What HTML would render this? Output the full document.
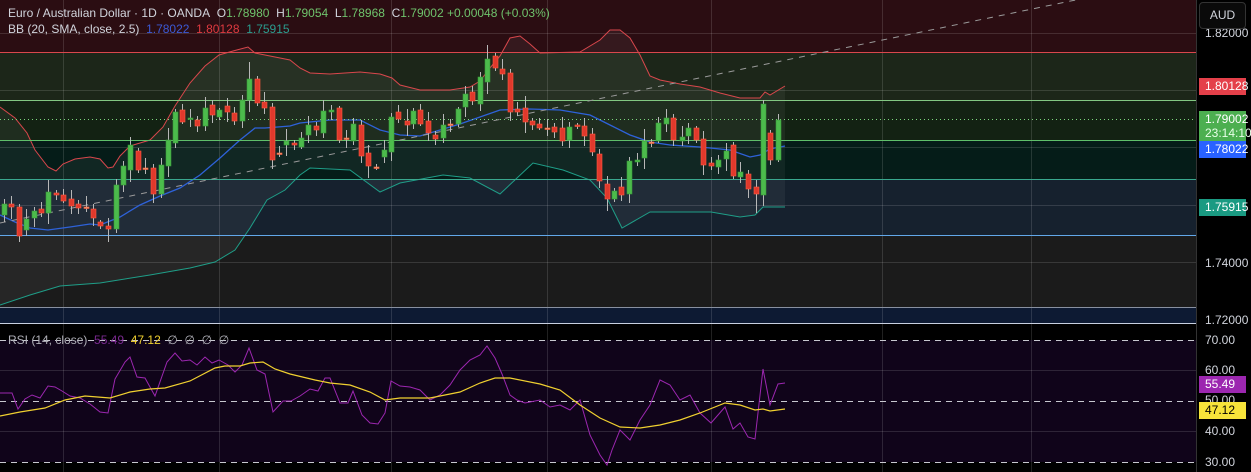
<!DOCTYPE html><html><head><meta charset="utf-8"><style>
body{margin:0;background:#000;width:1251px;height:472px;overflow:hidden;font-family:"Liberation Sans",sans-serif}
svg{position:absolute;left:0;top:0}
.t{position:absolute;font-size:12px;color:#d1d4dc;white-space:nowrap}
.lb{position:absolute;left:1199px;width:47px;font-size:12px;color:#fff;padding-left:6px;box-sizing:border-box;height:17px;line-height:17px}
.ax{position:absolute;left:1205px;font-size:12px;color:#d1d4dc}
</style></head><body>
<svg width="1251" height="472" id="s">
<rect x="0" y="0" width="1196" height="52" fill="#2b0d12"/>
<rect x="0" y="52" width="1196" height="48" fill="#1c2619"/>
<rect x="0" y="100" width="1196" height="40" fill="#132213"/>
<rect x="0" y="140" width="1196" height="39" fill="#051c18"/>
<rect x="0" y="179" width="1196" height="56" fill="#16212e"/>
<rect x="0" y="235" width="1196" height="72" fill="#1b1b1b"/>
<rect x="0" y="307" width="1196" height="16" fill="#0d1a33"/>
<rect x="0" y="324" width="1196" height="148" fill="#000"/>
<rect x="0" y="340" width="1196" height="122" fill="#10041a"/>
<g stroke="#ffffff" stroke-opacity="0.13" stroke-width="1">
<path d="M63.5 0V472M219.5 0V472M391.5 0V472M547.5 0V472M711.5 0V472M882.5 0V472M1031.5 0V472"/>
<path d="M0 33.5H1196M0 90.5H1196M0 147.5H1196M0 205.5H1196M0 262.5H1196M0 370.5H1196M0 431.5H1196"/>
</g>
<g id="bb"></g>
<line x1="0" y1="52.5" x2="1196" y2="52.5" stroke="#d9474c"/>
<line x1="0" y1="100.5" x2="1196" y2="100.5" stroke="#82c882"/>
<line x1="0" y1="119.5" x2="1196" y2="119.5" stroke="#7ed67e" stroke-dasharray="1 3"/>
<line x1="0" y1="140.5" x2="1196" y2="140.5" stroke="#5fbf6a"/>
<line x1="0" y1="179.5" x2="1196" y2="179.5" stroke="#3aa88e"/>
<line x1="0" y1="235.5" x2="1196" y2="235.5" stroke="#62a8ea"/>
<line x1="0" y1="307.5" x2="1196" y2="307.5" stroke="#8890a0"/>
<line x1="0" y1="223" x2="1090" y2="-3" stroke="#9a9a9a" stroke-dasharray="6 6"/>
<g id="cd"></g>
<line x1="0" y1="323.5" x2="1251" y2="323.5" stroke="#c8d0e0"/>
<g stroke="#c8c8d0" stroke-dasharray="6 5"><path d="M0 340.5H1196M0 462.5H1196M0 401.5H1196"/></g>
<g id="rs"></g>
<rect x="1196" y="0" width="55" height="472" fill="#000"/>
<line x1="1196.5" y1="0" x2="1196.5" y2="472" stroke="#333"/>
</svg>
<div class="t" style="left:8px;top:6px">Euro / Australian Dollar · 1D · OANDA&nbsp; O<span style="color:#6fc36c">1.78980</span>&nbsp; H<span style="color:#6fc36c">1.79054</span>&nbsp; L<span style="color:#6fc36c">1.78968</span>&nbsp; C<span style="color:#6fc36c">1.79002</span> <span style="color:#6fc36c">+0.00048 (+0.03%)</span></div>
<div class="t" style="left:8px;top:22px">BB (20, SMA, close, 2.5)&nbsp; <span style="color:#3c5ad6">1.78022</span>&nbsp; <span style="color:#e03a40">1.80128</span>&nbsp; <span style="color:#2a9d8f">1.75915</span></div>
<div class="t" style="left:8px;top:333px;color:#b0b0b8">RSI (14, close)&nbsp; <span style="color:#7a2a90">55.49</span>&nbsp; <span style="color:#f0d030">47.12</span>&nbsp; ∅&nbsp; ∅&nbsp; ∅&nbsp; ∅</div>
<div class="ax" style="top:26px">1.82000</div>
<div style="position:absolute;left:1199px;top:2px;width:45px;height:25px;border:1px solid #333;border-radius:4px;background:#0a0a0a;color:#d1d4dc;font-size:12px;line-height:25px;text-align:center">AUD</div>
<div class="lb" style="top:78px;background:#e4404a">1.80128</div>
<div class="lb" style="top:111px;height:30px;line-height:14px;padding-top:1px;background:#4caf50">1.79002<br><span style="color:#e8ffe8">23:14:10</span></div>
<div class="lb" style="top:141px;background:#2962ff">1.78022</div>
<div class="lb" style="top:199px;background:#1a9a82">1.75915</div>
<div class="ax" style="top:256px">1.74000</div>
<div class="ax" style="top:313px">1.72000</div>
<div class="ax" style="top:333px">70.00</div>
<div class="ax" style="top:363px">60.00</div>
<div class="lb" style="top:376px;background:#9c27b0">55.49</div>
<div class="ax" style="top:393px">50.00</div>
<div class="lb" style="top:402px;background:#f7e43a;color:#000">47.12</div>
<div class="ax" style="top:424px">40.00</div>
<div class="ax" style="top:455px">30.00</div>
<script>
var NS="http://www.w3.org/2000/svg";
function el(p,t,a){var e=document.createElementNS(NS,t);for(var k in a)e.setAttribute(k,a[k]);p.appendChild(e);return e;}
function pts(a){return a.map(function(p){return p[0]+","+p[1]}).join(" ");}
var up=[[0,107],[15,118],[27,133],[35,150],[48,167],[56,171],[63,164],[75,159],[90,157],[100,159],[108,168],[113,167],[120,156],[130,146],[140,143],[150,140],[163,127],[175,106],[190,83],[205,66],[219,55],[233,51],[248,47],[255,53],[265,55],[290,60],[300,68],[310,73],[330,74],[360,72],[380,74],[392,78],[400,85],[420,90],[450,90],[470,87],[480,81],[490,68],[500,56],[510,38],[520,36],[530,44],[540,53],[580,52],[600,40],[610,30],[620,30],[630,38],[640,55],[650,76],[660,80],[680,84],[700,87],[720,93],[740,98],[760,98],[765,92],[770,95],[785,86]];
var mid=[[0,215],[15,222],[30,228],[48,230],[70,227],[90,224],[100,225],[120,217],[140,205],[160,196],[180,188],[200,175],[220,158],[240,140],[255,128],[265,128],[290,126],[300,123],[330,120],[360,120],[380,130],[400,135],[420,136],[440,130],[460,124],[480,117],[500,110],[530,109],[560,110],[590,115],[610,125],[630,135],[650,142],[670,145],[700,147],[730,150],[750,157],[760,155],[770,149],[785,146]];
var lo=[[0,305],[30,295],[60,286],[100,283],[150,275],[190,268],[215,262],[235,250],[250,228],[267,200],[285,190],[300,175],[310,168],[350,170],[380,192],[400,183],[443,175],[470,178],[500,194],[533,163],[563,170],[590,180],[607,198],[622,228],[650,212],[711,212],[740,217],[755,215],[763,207],[785,207]];
var bb=document.getElementById("bb");
el(bb,"polygon",{points:pts(up.concat(lo.slice().reverse())),fill:"#ffffff","fill-opacity":"0.05"});
el(bb,"polyline",{points:pts(up),fill:"none",stroke:"#d9474c","stroke-width":"1"});
el(bb,"polyline",{points:pts(mid),fill:"none",stroke:"#2e62d9","stroke-width":"1.3"});
el(bb,"polyline",{points:pts(lo),fill:"none",stroke:"#1f9e88","stroke-width":"1"});
var C=[[4,215,204],[11,204,207],[19,207,236],[26,230,219],[34,218,211],[41,209,213],[48,213,192],[56,193,195],[63,195,201],[71,199,206],[78,204,208],[86,207,207],[93,209,218],[100,222,226],[108,226,229],[116,229,185],[123,185,166],[130,170,145],[138,151,170],[145,168,168],[153,168,194],[161,194,165],[168,166,140],[175,143,112],[182,110,122],[190,119,118],[197,120,126],[205,126,108],[212,105,115],[219,117,110],[227,106,112],[234,113,121],[242,121,100],[249,100,79],[257,79,103],[264,102,108],[272,107,160],[279,153,153],[286,145,141],[294,143,145],[301,147,138],[308,135,125],[316,126,130],[323,133,111],[331,112,110],[339,108,140],[346,138,138],[353,141,124],[361,125,156],[368,153,166],[376,167,167],[384,157,150],[391,152,117],[398,112,119],[407,121,125],[413,124,111],[420,110,124],[428,121,133],[435,135,139],[443,138,125],[450,124,124],[458,124,109],[465,107,94],[472,92,101],[480,104,77],[487,82,59],[495,56,68],[502,69,74],[510,73,112],[517,109,112],[525,108,122],[532,121,125],[539,124,128],[547,128,128],[554,127,132],[562,128,141],[569,140,127],[577,125,126],[584,126,136],[592,134,152],[599,154,181],[607,184,199],[614,199,191],[621,187,195],[629,194,161],[637,162,160],[644,158,141],[651,142,142],[658,141,123],[666,124,118],[673,118,140],[682,141,137],[688,136,128],[696,128,140],[703,139,165],[711,163,166],[718,167,160],[726,159,151],[733,145,176],[740,177,172],[748,174,189],[756,187,194],[763,195,104],[770,133,160],[778,160,120]];
var W=[5,8,3,10,4,7,12,3,6,9,4,11,5,2,8,6];
var cd=document.getElementById("cd");
C.forEach(function(c,i){var x=c[0],o=c[1],cl=c[2];var g=cl<o?"#4cbb4c":(cl==o?"#e8a070":"#e0392c");
var top=Math.min(o,cl),bot=Math.max(o,cl);var wt=top-W[i%16],wb=bot+W[(i+5)%16];
if(x==249)wt=62;if(x==487)wt=45;if(x==763){wt=100;}if(x==756)wb=213;if(x==19)wb=242;if(x==108)wb=242;
el(cd,"line",{x1:x+0.5,y1:wt,x2:x+0.5,y2:wb,stroke:"#b8b8b8","stroke-width":"1"});
var h=Math.max(bot-top,1.5);el(cd,"rect",{x:x-2,y:top,width:5,height:h,fill:g,stroke:cl<o?"#3a9a3a":"#ff5a40","stroke-width":"0.6"});});
var rsi=[[0,393],[12,393],[18,409],[25,399],[32,395],[40,398],[48,386],[55,387],[62,391],[70,396],[80,398],[90,404],[100,412],[108,413],[115,379],[125,362],[130,357],[137,377],[145,378],[155,396],[167,362],[175,353],[182,361],[190,360],[197,365],[205,357],[212,363],[219,360],[228,365],[235,372],[242,365],[249,348],[257,370],[265,374],[273,412],[283,401],[291,401],[300,396],[310,389],[318,391],[325,378],[330,378],[340,403],[348,403],[353,391],[362,415],[370,423],[378,424],[385,413],[391,381],[400,386],[410,387],[420,390],[430,400],[440,395],[450,385],[460,370],[470,360],[480,355],[487,346],[495,358],[502,374],[510,395],[517,400],[525,403],[540,400],[550,407],[560,405],[570,410],[580,400],[590,435],[600,455],[607,465],[612,450],[620,430],[630,440],[640,420],[650,405],[660,380],[670,385],[680,400],[690,395],[700,413],[711,423],[725,407],[733,429],[740,423],[748,437],[755,439],[763,369],[770,405],[778,384],[785,383]];
var ma=[[0,416],[20,412],[45,408],[65,400],[85,396],[110,398],[130,392],[150,389],[165,388],[190,381],[215,368],[225,366],[240,366],[250,363],[263,362],[275,369],[290,374],[315,380],[330,383],[350,385],[370,392],[385,400],[400,398],[430,398],[460,392],[480,383],[495,378],[510,378],[540,384],[560,390],[580,405],[600,418],[620,427],[640,428],[660,425],[680,420],[700,413],[725,403],[740,405],[755,410],[763,409],[770,411],[785,409]];
var rs=document.getElementById("rs");
el(rs,"polyline",{points:pts(rsi),fill:"none",stroke:"#9c27b0","stroke-width":"1"});
el(rs,"polyline",{points:pts(ma),fill:"none",stroke:"#f0d030","stroke-width":"1.2"});
</script>
</body></html>
